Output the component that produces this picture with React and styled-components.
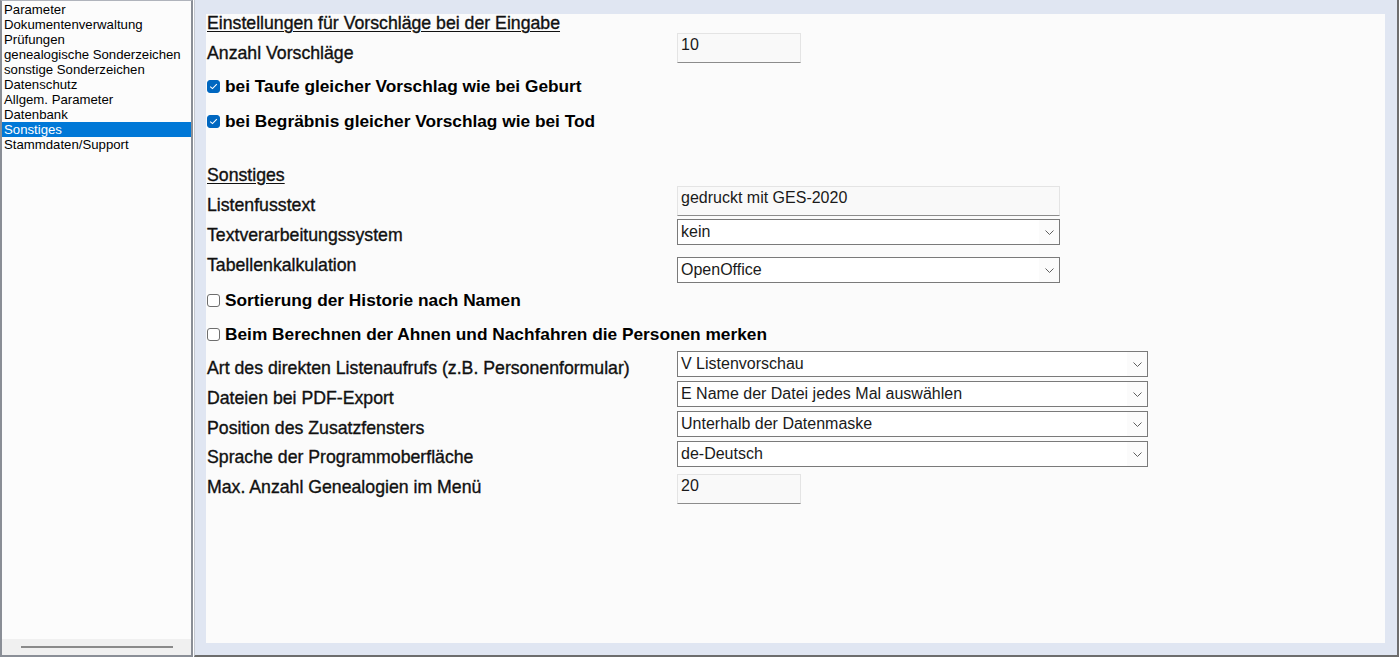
import React from "react";
import styled, { createGlobalStyle } from "styled-components";

const GlobalStyle = createGlobalStyle`
  html, body {
    margin: 0;
    padding: 0;
    overflow: hidden;
    background: #ffffff;
  }
  body {
    font-family: "Liberation Sans", Arial, sans-serif;
  }
`;

const Window = styled.div`
  display: flex;
  gap: 1px;
  width: 1399px;
  height: 657px;
  box-sizing: border-box;
`;

const Sidebar = styled.div`
  display: flex;
  flex-direction: column;
  width: 193px;
  flex-shrink: 0;
  box-sizing: border-box;
  border: 2px solid #8a8e96;
  border-top: 1px solid #b0b4bc;
  background: #fcfcfc;
`;

const NavList = styled.ul`
  list-style: none;
  margin: 0;
  padding: 1px 0 0 0;
  flex: 1;
`;

const NavItem = styled.li`
  height: 15px;
  line-height: 15px;
  padding-left: 2px;
  font-size: 13.2px;
  color: ${(p) => (p.$active ? "#ffffff" : "#000000")};
  background: ${(p) => (p.$active ? "#0078d7" : "transparent")};
  white-space: nowrap;
`;

const ScrollTrack = styled.div`
  display: flex;
  align-items: center;
  justify-content: center;
  height: 16px;
  background: #f0f0f0;
`;

const ScrollThumb = styled.div`
  width: 152px;
  height: 2px;
  background: #8a8a8a;
`;

const MainPane = styled.div`
  flex: 1;
  display: flex;
  box-sizing: border-box;
  background: #e0e6f2;
  border-left: 1px solid #c4c8d0;
  border-right: 2px solid #6d6d6d;
  border-bottom: 2px solid #6d6d6d;
  padding: 14px 12px 12px 11px;
`;

const Content = styled.div`
  flex: 1;
  background: #fbfbfb;
  padding-left: 1px;
  display: flex;
  flex-direction: column;
`;

const Row = styled.div`
  display: grid;
  grid-template-columns: 470px auto;
  align-items: start;
  height: ${(p) => p.$h}px;
  flex-shrink: 0;
`;

const Label = styled.div`
  padding-top: ${(p) => p.$top || 0}px;
  font-size: 17.7px;
  line-height: 18px;
  color: #111111;
  white-space: nowrap;
  -webkit-text-stroke: 0.35px #111111;
  text-decoration: ${(p) => (p.$underline ? "underline" : "none")};
  text-underline-offset: 2px;
`;

const CheckRow = styled.label`
  grid-column: 1 / span 2;
  display: flex;
  align-items: center;
  gap: 5px;
  padding-top: ${(p) => p.$top || 0}px;
  font-size: 17.3px;
  line-height: 18px;
  font-weight: 700;
  color: #000000;
  white-space: nowrap;
`;

const Box = styled.span`
  width: 13px;
  height: 13px;
  box-sizing: border-box;
  border-radius: 3px;
  display: flex;
  align-items: center;
  justify-content: center;
  background: ${(p) => (p.$checked ? "#0067c0" : "#ffffff")};
  border: 1px solid ${(p) => (p.$checked ? "#0067c0" : "#6e6e6e")};
`;

const Control = styled.div`
  padding-top: ${(p) => p.$top || 0}px;
`;

const TextBox = styled.div`
  width: ${(p) => p.$w}px;
  height: ${(p) => p.$h || 30}px;
  box-sizing: border-box;
  background: #f9f9f9;
  border: 1px solid #e4e4e4;
  border-bottom: 1px solid #8c8c8c;
  padding: ${(p) => p.$pt || 2}px 3px 0 3px;
  font-size: 16px;
  line-height: 18px;
  color: #1a1a1a;
`;

const Select = styled.div`
  width: ${(p) => p.$w}px;
  height: 26px;
  box-sizing: border-box;
  display: flex;
  align-items: center;
  justify-content: space-between;
  background: #ffffff;
  border: 1px solid #7a7a7a;
  padding-left: 3px;
  font-size: 16px;
  line-height: 18px;
  color: #1a1a1a;
`;

const Chevron = styled.span`
  display: flex;
  align-items: center;
  justify-content: center;
  width: 20px;
  height: 100%;
  background: #fbfbfb;
`;

const Spacer = styled.div`
  height: ${(p) => p.$h}px;
  flex-shrink: 0;
`;

const navItems = [
  "Parameter",
  "Dokumentenverwaltung",
  "Prüfungen",
  "genealogische Sonderzeichen",
  "sonstige Sonderzeichen",
  "Datenschutz",
  "Allgem. Parameter",
  "Datenbank",
  "Sonstiges",
  "Stammdaten/Support",
];

function Check({ checked }) {
  return (
    <Box $checked={checked}>
      {checked && (
        <svg width="9" height="7" viewBox="0 0 9 7">
          <path d="M1.2 3.6 L3.5 5.6 L7.8 1.2" fill="none" stroke="#ffffff" strokeWidth="1.1" />
        </svg>
      )}
    </Box>
  );
}

function Dropdown({ value, width }) {
  return (
    <Select $w={width}>
      <span>{value}</span>
      <Chevron>
        <svg width="9" height="5" viewBox="0 0 9 5">
          <path d="M0.5 0.5 L4.5 4.5 L8.5 0.5" fill="none" stroke="#5f5f5f" strokeWidth="1" />
        </svg>
      </Chevron>
    </Select>
  );
}

export default function App() {
  return (
    <>
      <GlobalStyle />
      <Window>
        <Sidebar>
          <NavList>
            {navItems.map((item) => (
              <NavItem key={item} $active={item === "Sonstiges"}>{item}</NavItem>
            ))}
          </NavList>
          <ScrollTrack>
            <ScrollThumb />
          </ScrollTrack>
        </Sidebar>

        <MainPane>
          <Content>
            <Row $h={18}>
              <Label $underline>Einstellungen für Vorschläge bei der Eingabe</Label>
            </Row>
            <Row $h={32}>
              <Label $top={12}>Anzahl Vorschläge</Label>
              <Control $top={1}><TextBox $w={124}>10</TextBox></Control>
            </Row>
            <Row $h={44}>
              <CheckRow $top={13}><Check checked />bei Taufe gleicher Vorschlag wie bei Geburt</CheckRow>
            </Row>
            <Row $h={26}>
              <CheckRow $top={4}><Check checked />bei Begräbnis gleicher Vorschlag wie bei Tod</CheckRow>
            </Row>

            <Spacer $h={30} />

            <Row $h={22}>
              <Label $top={2} $underline>Sonstiges</Label>
            </Row>
            <Row $h={31}>
              <Label $top={10}>Listenfusstext</Label>
              <Control><TextBox $w={383} $pt={2}>gedruckt mit GES-2020</TextBox></Control>
            </Row>
            <Row $h={38}>
              <Label $top={9}>Textverarbeitungssystem</Label>
              <Control $top={2}><Dropdown width={383} value="kein" /></Control>
            </Row>
            <Row $h={33}>
              <Label $top={1}>Tabellenkalkulation</Label>
              <Control $top={2}><Dropdown width={383} value="OpenOffice" /></Control>
            </Row>
            <Row $h={30}>
              <CheckRow $top={3}><Check />Sortierung der Historie nach Namen</CheckRow>
            </Row>
            <Row $h={32}>
              <CheckRow $top={7}><Check />Beim Berechnen der Ahnen und Nachfahren die Personen merken</CheckRow>
            </Row>
            <Row $h={30}>
              <Label $top={9}>Art des direkten Listenaufrufs (z.B. Personenformular)</Label>
              <Control $top={1}><Dropdown width={471} value="V Listenvorschau" /></Control>
            </Row>
            <Row $h={30}>
              <Label $top={9}>Dateien bei PDF-Export</Label>
              <Control $top={1}><Dropdown width={471} value="E Name der Datei jedes Mal auswählen" /></Control>
            </Row>
            <Row $h={30}>
              <Label $top={9}>Position des Zusatzfensters</Label>
              <Control $top={1}><Dropdown width={471} value="Unterhalb der Datenmaske" /></Control>
            </Row>
            <Row $h={30}>
              <Label $top={8}>Sprache der Programmoberfläche</Label>
              <Control $top={1}><Dropdown width={471} value="de-Deutsch" /></Control>
            </Row>
            <Row $h={36}>
              <Label $top={8}>Max. Anzahl Genealogien im Menü</Label>
              <Control $top={4}><TextBox $w={124}>20</TextBox></Control>
            </Row>
          </Content>
        </MainPane>
      </Window>
    </>
  );
}
